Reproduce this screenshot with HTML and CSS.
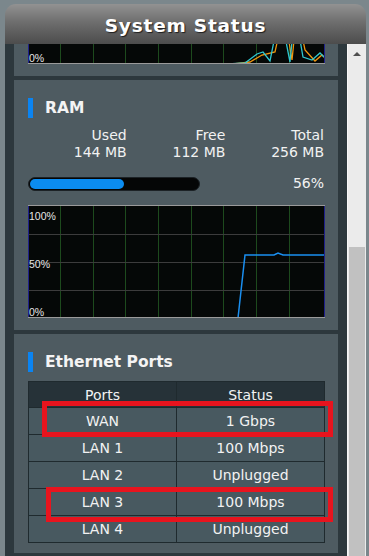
FILE: index.html
```html
<!DOCTYPE html>
<html lang="en">
<head>
    <meta charset="UTF-8">
    <meta name="viewport" content="width=device-width, initial-scale=1.0">
    <title>System Status</title>
    <link rel="stylesheet" href="styles.css">
</head>
<body>
    <div class="frame">
        <header class="status-header">
            <h1>System Status</h1>
        </header>
        <div class="main">
            <div class="scroller">
                <div class="content">
                    <!-- CPU card, scrolled mostly out of view -->
                    <section class="card">
                        <svg class="chart" width="297" height="113" viewBox="0 0 297 113">
                            <rect x="0" y="0" width="297" height="113" fill="#050807"/>
                            <g stroke="#1d4a1d" stroke-width="1">
                                <line x1="32.5" y1="0" x2="32.5" y2="113"/>
                                <line x1="65.5" y1="0" x2="65.5" y2="113"/>
                                <line x1="97.5" y1="0" x2="97.5" y2="113"/>
                                <line x1="130.5" y1="0" x2="130.5" y2="113"/>
                                <line x1="163.5" y1="0" x2="163.5" y2="113"/>
                                <line x1="195.5" y1="0" x2="195.5" y2="113"/>
                                <line x1="228.5" y1="0" x2="228.5" y2="113"/>
                                <line x1="261.5" y1="0" x2="261.5" y2="113"/>
                            </g>
                            <polyline fill="none" stroke="#f0960f" stroke-width="1.3" points="205,113 222,111 234,104 247,101 256,60 264,109 269,60 277,99 287,110 294,104 297,107"/>
                            <polyline fill="none" stroke="#2fc7d0" stroke-width="1.3" points="200,113 217,112 229,103 235,101 242,110 252,60 262,111 267,60 275,106 284,109 292,102 296,106"/>
                            <line x1="0.5" y1="0" x2="0.5" y2="113" stroke="#20208a"/>
                            <line x1="296.5" y1="0" x2="296.5" y2="113" stroke="#20208a"/>
                            <line x1="0" y1="112.5" x2="297" y2="112.5" stroke="#9a9a9a"/>
                            <text class="chart-label" x="1" y="111">0%</text>
                        </svg>
                    </section>

                    <section class="card">
                        <h2 class="card-title">RAM</h2>
                        <div class="stats">
                            <div class="stat"><span>Used</span><span>144 MB</span></div>
                            <div class="stat"><span>Free</span><span>112 MB</span></div>
                            <div class="stat"><span>Total</span><span>256 MB</span></div>
                        </div>
                        <div class="usage">
                            <div class="bar"><div class="bar-fill" style="width: 56%"></div></div>
                            <span class="percent">56%</span>
                        </div>
                        <svg class="chart ram-chart" width="297" height="113" viewBox="0 0 297 113">
                            <rect x="0" y="0" width="297" height="113" fill="#050807"/>
                            <g stroke="#1d4a1d" stroke-width="1">
                                <line x1="32.5" y1="0" x2="32.5" y2="113"/>
                                <line x1="65.5" y1="0" x2="65.5" y2="113"/>
                                <line x1="97.5" y1="0" x2="97.5" y2="113"/>
                                <line x1="130.5" y1="0" x2="130.5" y2="113"/>
                                <line x1="163.5" y1="0" x2="163.5" y2="113"/>
                                <line x1="195.5" y1="0" x2="195.5" y2="113"/>
                                <line x1="228.5" y1="0" x2="228.5" y2="113"/>
                                <line x1="261.5" y1="0" x2="261.5" y2="113"/>
                            </g>
                            <g stroke="#3c3c3c" stroke-width="1">
                                <line x1="0" y1="29.5" x2="297" y2="29.5"/>
                                <line x1="0" y1="57.5" x2="297" y2="57.5"/>
                                <line x1="0" y1="85.5" x2="297" y2="85.5"/>
                            </g>
                            <polyline fill="none" stroke="#1a8ff0" stroke-width="1.5" points="210,113 217,50 246,50 250,48 255,50 297,50"/>
                            <line x1="0.5" y1="0" x2="0.5" y2="113" stroke="#20208a"/>
                            <line x1="296.5" y1="0" x2="296.5" y2="113" stroke="#20208a"/>
                            <line x1="0" y1="0.5" x2="297" y2="0.5" stroke="#9a9a9a"/>
                            <line x1="0" y1="112.5" x2="297" y2="112.5" stroke="#9a9a9a"/>
                            <text class="chart-label" x="1" y="15">100%</text>
                            <text class="chart-label" x="1" y="63">50%</text>
                            <text class="chart-label" x="1" y="111">0%</text>
                        </svg>
                    </section>

                    <section class="card ports-card">
                        <h2 class="card-title">Ethernet Ports</h2>
                        <table class="ports">
                            <thead>
                                <tr><th>Ports</th><th>Status</th></tr>
                            </thead>
                            <tbody>
                                <tr><td>WAN</td><td>1 Gbps</td></tr>
                                <tr><td>LAN 1</td><td>100 Mbps</td></tr>
                                <tr><td>LAN 2</td><td>Unplugged</td></tr>
                                <tr><td>LAN 3</td><td>100 Mbps</td></tr>
                                <tr><td>LAN 4</td><td>Unplugged</td></tr>
                            </tbody>
                        </table>
                        <!-- red highlight boxes drawn over the table -->
                        <div class="mark mark-wan"></div>
                        <div class="mark mark-lan3"></div>
                    </section>
                </div>
            </div>
            <div class="scrollbar">
                <div class="scroll-up"></div>
                <div class="scroll-thumb"></div>
            </div>
        </div>
    </div>
</body>
</html>
```

FILE: styles.css
```css
body {
    margin: 0;
    background: #7b878c;
    font-family: "DejaVu Sans", Verdana, sans-serif;
    color: #f2f2f2;
}

.frame {
    width: 361px;
    height: 556px;
    padding: 4px 3px 0 5px;
    overflow: hidden;
}

.status-header {
    height: 40px;
    border-radius: 11px 11px 0 0;
    background: linear-gradient(to bottom, #929292 0%, #6e6e6e 45%, #4c4c4c 100%);
    display: flex;
    align-items: center;
    justify-content: center;
}

.status-header h1 {
    margin: 0;
    padding-top: 2px;
    font-size: 18.5px;
    font-weight: bold;
    letter-spacing: 0.8px;
    color: #ffffff;
    text-shadow: 1px 1px 1px #1e1e1e;
}

.main {
    display: flex;
    height: 512px;
    background: #2d383d;
}

.scroller {
    flex: 1;
    overflow: hidden;
    padding: 0 9px;
}

.content {
    margin-top: -111px;
    display: flex;
    flex-direction: column;
    gap: 4px;
}

.card {
    position: relative;
    background: #4e5b61;
    padding: 18px 13px 12px 14px;
}

.card-title {
    margin: 0;
    height: 20px;
    display: flex;
    align-items: center;
    font-size: 15.5px;
    font-weight: bold;
    color: #f4f4f4;
}

.card-title::before {
    content: "";
    width: 5px;
    height: 20px;
    margin-right: 12px;
    background: #0a84f2;
}

.chart {
    display: block;
}

.chart-label {
    font-family: "Liberation Sans", Arial, sans-serif;
    font-size: 10.5px;
    fill: #e6e6e6;
}

.stats {
    margin-top: 9px;
    width: 296px;
    display: grid;
    grid-template-columns: repeat(3, 1fr);
    font-size: 14px;
    line-height: 17px;
}

.stat {
    display: flex;
    flex-direction: column;
    align-items: flex-end;
}

.usage {
    margin-top: 14px;
    width: 296px;
    height: 17px;
    display: flex;
    align-items: center;
    justify-content: space-between;
}

.bar {
    width: 168px;
    height: 10px;
    padding: 1px;
    border-radius: 7px;
    background: #050606;
    border: 1px solid #1c2226;
}

.bar-fill {
    height: 100%;
    border-radius: 6px;
    background: #0b8cf0;
}

.percent {
    font-size: 14px;
    line-height: 17px;
}

.ram-chart {
    margin-top: 13px;
}

.ports-card {
    padding-bottom: 10px;
}

.ports {
    margin-top: 9px;
    width: 297px;
    border-collapse: collapse;
    font-size: 14px;
    color: #f2f2f2;
}

.ports th,
.ports td {
    width: 50%;
    padding: 0;
    text-align: center;
    border: 1px solid #1f2a2e;
}

.ports th {
    height: 25px;
    font-weight: normal;
    background: #263238;
}

.ports td {
    height: 26px;
    background: #485960;
}

.mark {
    position: absolute;
    border: 5px solid #e8141e;
}

.mark-wan {
    left: 28px;
    top: 67px;
    width: 281px;
    height: 26px;
}

.mark-lan3 {
    left: 32px;
    top: 153px;
    width: 277px;
    height: 25px;
}

.scrollbar {
    width: 19px;
    background: #ebebeb;
    border-left: 1px solid #f7f7f7;
    box-sizing: border-box;
    display: flex;
    flex-direction: column;
}

.scroll-up {
    height: 20px;
    position: relative;
}

.scroll-up::after {
    content: "";
    position: absolute;
    left: 5px;
    top: 8px;
    border-left: 4px solid transparent;
    border-right: 4px solid transparent;
    border-bottom: 4px solid #4f4f4f;
}

.scroll-thumb {
    margin: 183px 1px 0 1px;
    flex: 1;
    background: #c1c1c1;
}
```
